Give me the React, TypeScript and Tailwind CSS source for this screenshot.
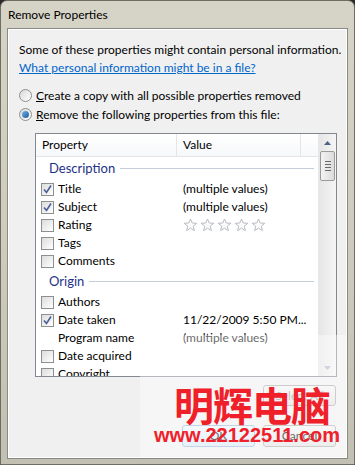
import React from "react"

const font = { fontFamily: 'Lato, "Liberation Sans", sans-serif' }

function Check({ on }: { on?: boolean }) {
  return (
    <div className="flex h-[13px] w-[13px] items-center justify-center border border-[#8e8f8f] bg-gradient-to-br from-[#dcdcdc] to-white">
      {on && (
        <svg width="11" height="11" viewBox="0 0 11 11">
          <path d="M2 5.5 L4.5 8.5 L9 1.5" fill="none" stroke="#4a5f97" strokeWidth="1.6" />
        </svg>
      )}
    </div>
  )
}

function Radio({ on }: { on?: boolean }) {
  return (
    <div className="flex h-[13px] w-[13px] items-center justify-center rounded-full border border-[#8e8f8f] bg-gradient-to-br from-[#d8d8d8] to-white">
      {on && <div className="h-[7px] w-[7px] rounded-full bg-gradient-to-br from-[#6fb3e6] to-[#1c5a9c]" />}
    </div>
  )
}

function Star() {
  return (
    <svg width="15" height="14" viewBox="0 0 15 14">
      <path
        d="M7.5 1 L9.3 5 L13.8 5.3 L10.3 8.2 L11.4 12.6 L7.5 10.2 L3.6 12.6 L4.7 8.2 L1.2 5.3 L5.7 5 Z"
        fill="#fbfbfb"
        stroke="#b8bcc2"
        strokeWidth="1"
      />
    </svg>
  )
}

function Row({ label, value, on, box = true, stars }: { label: string; value?: string; on?: boolean; box?: boolean; stars?: boolean }) {
  return (
    <div className="flex h-[18px] items-center">
      <div className="w-[17px]">{box && <Check on={on} />}</div>
      <div className="w-[125px] text-[12px] text-black">{label}</div>
      {stars ? (
        <div className="flex gap-[2px]">
          <Star />
          <Star />
          <Star />
          <Star />
          <Star />
        </div>
      ) : (
        <div className="text-[12px] text-black">{value}</div>
      )}
    </div>
  )
}

function Group({ title }: { title: string }) {
  return (
    <div className="flex h-[23px] items-center pl-[8px] pr-[4px]">
      <span className="text-[13px] text-[#1e3287]">{title}</span>
      <div className="ml-[5px] h-px flex-1 bg-[#c4cedb]" />
    </div>
  )
}

export default function App() {
  return (
    <div className="relative h-[465px] w-[355px] overflow-hidden bg-[#2a2a28]" style={font}>
      <div className="flex h-full flex-col rounded-t-[7px] border border-[#6d6d62] bg-gradient-to-b from-[#d6d4c6] via-[#cfccbd] to-[#c2c0b2]">
        <div className="flex h-[27px] items-center pl-[7px] text-[12px] text-black">Remove Properties</div>
        <div className="mx-[6px] mb-[5px] flex flex-1 flex-col border border-[#8a8a84] bg-[#f0f0f0] shadow-[inset_0_0_0_1px_#ffffff]">
          <div className="flex flex-col pl-[11px] pt-[12px]">
            <div className="h-[17px] whitespace-nowrap text-[12px] leading-[17px] text-black">Some of these properties might contain personal information.</div>
            <div className="mt-[1px] h-[17px] whitespace-nowrap text-[12px] leading-[17px] text-[#0066cc] underline">What personal information might be in a file?</div>
            <div className="mt-[10px] flex h-[19px] items-center gap-[4px]">
              <Radio />
              <span className="text-[12px] text-black">
                <u>C</u>reate a copy with all possible properties removed
              </span>
            </div>
            <div className="flex h-[19px] items-center gap-[4px]">
              <Radio on />
              <span className="text-[12px] text-black">
                <u>R</u>emove the following properties from this file:
              </span>
            </div>
          </div>

          <div className="ml-[27px] mr-[10px] mt-[9px] flex h-[244px] border border-[#828790] bg-white">
            <div className="flex flex-1 flex-col overflow-hidden">
              <div className="flex h-[23px] shrink-0 border-b border-[#e5e5e5] bg-gradient-to-b from-white to-[#f7f8fa] text-[12px] text-black">
                <div className="flex w-[141px] items-center border-r border-[#e5e5e5] pl-[6px]">Property</div>
                <div className="flex w-[124px] items-center border-r border-[#e5e5e5] pl-[6px]">Value</div>
                <div className="flex-1" />
              </div>
              <div className="pl-[5px]">
                <Group title="Description" />
                <Row label="Title" value="(multiple values)" on />
                <Row label="Subject" value="(multiple values)" on />
                <Row label="Rating" stars />
                <Row label="Tags" />
                <Row label="Comments" />
                <Group title="Origin" />
                <Row label="Authors" />
                <Row label="Date taken" value="11/22/2009 5:50 PM..." on />
                <Row label="Program name" value="(multiple values)" box={false} />
                <Row label="Date acquired" />
                <Row label="Copyright" />
              </div>
            </div>
            <div className="flex w-[18px] shrink-0 flex-col items-center border-l border-[#e8e8e8] bg-gradient-to-r from-[#e6e6e6] to-[#f5f5f5]">
              <div className="flex h-[17px] w-full items-center justify-center">
                <svg width="7" height="4" viewBox="0 0 7 4">
                  <path d="M0 4 L3.5 0 L7 4 Z" fill="#4d6185" />
                </svg>
              </div>
              <div className="flex h-[30px] w-[15px] flex-col items-center justify-center gap-[2px] rounded-[2px] border border-[#9a9a9a] bg-gradient-to-r from-[#f2f2f2] to-[#dcdcdc]">
                <div className="h-px w-[6px] bg-[#6a6a6a]" />
                <div className="h-px w-[6px] bg-[#6a6a6a]" />
                <div className="h-px w-[6px] bg-[#6a6a6a]" />
                <div className="h-px w-[6px] bg-[#6a6a6a]" />
              </div>
              <div className="flex-1" />
              <div className="flex h-[17px] w-full items-center justify-center">
                <svg width="7" height="4" viewBox="0 0 7 4">
                  <path d="M0 0 L3.5 4 L7 0 Z" fill="#b0b8c8" />
                </svg>
              </div>
            </div>
          </div>

          <div className="mr-[11px] mt-[8px] flex justify-end">
            <div className="flex h-[21px] w-[73px] items-center justify-center rounded-[3px] border border-[#acacac] bg-gradient-to-b from-[#f4f4f4] to-[#e2e2e2] text-[12px] text-[#9a9a9a]">
              Select All
            </div>
          </div>
          <div className="mr-[11px] mt-[19px] flex justify-end gap-[8px]">
            <div className="flex h-[22px] w-[73px] items-center justify-center rounded-[3px] border border-[#9ab4d8] bg-gradient-to-b from-[#eef6fc] to-[#d6e8f6] text-[12px] text-black">
              OK
            </div>
            <div className="flex h-[22px] w-[73px] items-center justify-center rounded-[3px] border border-[#acacac] bg-gradient-to-b from-[#f4f4f4] to-[#e2e2e2] text-[12px] text-black">
              Cancel
            </div>
          </div>
        </div>
      </div>

      <div className="pointer-events-none absolute left-[140px] top-[335px] h-[123px] w-[207px] bg-white/40" />
      <div
        className="pointer-events-none absolute left-[174px] top-[384px] text-[40px] font-bold leading-none tracking-[-1px] text-[#f0202a]"
        style={{ fontFamily: '"Noto Sans CJK SC", sans-serif' }}
      >
        明辉电脑
      </div>
      <div
        className="pointer-events-none absolute left-[154px] top-[425px] text-[20px] font-bold leading-none text-[#f0202a]"
        style={{ fontFamily: '"Liberation Sans", sans-serif' }}
      >
        www.22122511.com
      </div>
    </div>
  )
}
